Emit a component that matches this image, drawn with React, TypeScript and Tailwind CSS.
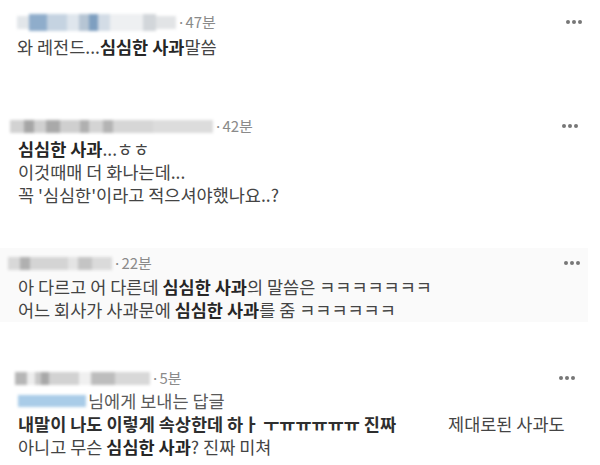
import React from 'react';

type Block = { w: number; c: string; h?: number };

interface CommentProps {
  blocks: Block[];
  time: string;
  dotsRight: number;
  children: React.ReactNode;
  className?: string;
}

const Dots: React.FC = () => (
  <div className="flex items-center gap-[2px]">
    <span className="w-[4px] h-[4px] rounded-full bg-[#777]" />
    <span className="w-[4px] h-[4px] rounded-full bg-[#777]" />
    <span className="w-[4px] h-[4px] rounded-full bg-[#777]" />
  </div>
);

const BlurName: React.FC<{ blocks: Block[] }> = ({ blocks }) => (
  <div className="flex items-center blur-[1.5px]">
    {blocks.map((b, i) => (
      <div key={i} style={{ width: b.w, height: b.h ?? 13, backgroundColor: b.c }} />
    ))}
  </div>
);

const Comment: React.FC<CommentProps> = ({ blocks, time, dotsRight, children, className }) => (
  <div className={className}>
    <div className="flex items-center justify-between h-[20px]" style={{ paddingRight: dotsRight }}>
      <div className="flex items-center">
        <BlurName blocks={blocks} />
        <span className="text-[15px] text-[#8a8a8a] ml-[1px]">·{time}</span>
      </div>
      <Dots />
    </div>
    {children}
  </div>
);

const B: React.FC<{ children: React.ReactNode }> = ({ children }) => (
  <span className="font-bold text-[#262626]">{children}</span>
);

export default function App() {
  return (
    <div
      className="w-[600px] h-[465px] bg-white overflow-hidden text-[17.5px] text-[#444]"
      style={{ fontFamily: '"Noto Sans CJK KR", "Noto Sans", sans-serif' }}
    >
      {/* 1 */}
      <Comment
        className="pt-[12px] pl-[17px]"
        time="47분"
        dotsRight={18}
        blocks={[
          { w: 12, c: '#e2e6ea' },
          { w: 18, c: '#8fadcb', h: 17 },
          { w: 20, c: '#c5d3e1', h: 17 },
          { w: 12, c: '#dfe6ed', h: 17 },
          { w: 10, c: '#b6c5d4', h: 17 },
          { w: 9, c: '#7e9fc0', h: 17 },
          { w: 12, c: '#d3dce6', h: 17 },
          { w: 33, c: '#eef0f2', h: 17 },
          { w: 13, c: '#d2d6da', h: 17 },
          { w: 20, c: '#e2e4e6', h: 13 },
        ]}
      >
        <p className="mt-[4px] leading-[22px]">
          와 레전드...<B>심심한 사과</B>말씀
        </p>
      </Comment>

      {/* 2 */}
      <Comment
        className="mt-[58px] pl-[10px]"
        time="42분"
        dotsRight={22}
        blocks={[
          { w: 14, c: '#d2d2d2' },
          { w: 10, c: '#a6a6a6' },
          { w: 12, c: '#d0d0d0' },
          { w: 14, c: '#a9a9a9' },
          { w: 20, c: '#cfcfcf' },
          { w: 9, c: '#b0b0b0' },
          { w: 14, c: '#d4d4d4' },
          { w: 10, c: '#b4b4b4' },
          { w: 40, c: '#d6d6d6' },
          { w: 60, c: '#dcdcdc' },
        ]}
      >
        <div className="mt-[1px] leading-[23px] pl-[8px]">
          <p>
            <B>심심한 사과</B>...ㅎㅎ
          </p>
          <p>이것때매 더 화나는데...</p>
          <p>꼭 '심심한'이라고 적으셔야했나요..?</p>
        </div>
      </Comment>

      {/* 3 */}
      <div className="mt-[42px] bg-[#fafafa] w-[588px] pt-[5px] pb-[1px]">
        <Comment
          className="pl-[8px]"
          time="22분"
          dotsRight={8}
          blocks={[
            { w: 12, c: '#d8d8d8' },
            { w: 10, c: '#b0b0b0' },
            { w: 38, c: '#d4d4d4' },
            { w: 10, c: '#e4e4e4' },
            { w: 14, c: '#c4c4c4' },
            { w: 20, c: '#dadada' },
          ]}
        >
          <div className="mt-[2px] leading-[23px] pl-[10px]">
            <p>
              아 다르고 어 다른데 <B>심심한 사과</B>의 말씀은 ㅋㅋㅋㅋㅋㅋㅋ
            </p>
            <p>
              어느 회사가 사과문에 <B>심심한 사과</B>를 줌 ㅋㅋㅋㅋㅋㅋ
            </p>
          </div>
        </Comment>
      </div>

      {/* 4 */}
      <Comment
        className="mt-[46px] pl-[15px]"
        time="5분"
        dotsRight={25}
        blocks={[
          { w: 12, c: '#b6b6b6' },
          { w: 8, c: '#ededed' },
          { w: 6, c: '#c8c8c8' },
          { w: 8, c: '#a8a8a8' },
          { w: 30, c: '#d2d2d2' },
          { w: 12, c: '#f0f0f0' },
          { w: 24, c: '#bdbdbd' },
          { w: 35, c: '#d8d8d8' },
        ]}
      >
        <div className="mt-[1px] leading-[23px] pl-[3px]">
          <p className="flex items-center">
            <span className="inline-block w-[68px] h-[12px] bg-[#a9cce8] blur-[1.5px] mr-[2px]" />
            <span className="text-[#5a5a5a]">님에게 보내는 답글</span>
          </p>
          <p className="whitespace-nowrap">
            <span className="font-bold text-[#2e2e2e]">내말이 나도 이렇게 속상한데 하ㅏ ㅜㅠㅠㅠㅠㅠ 진짜</span>
            <span className="inline-block w-[52px]" />
            제대로된 사과도
          </p>
          <p>
            아니고 무슨 <B>심심한 사과</B>? 진짜 미쳐
          </p>
        </div>
      </Comment>
    </div>
  );
}
